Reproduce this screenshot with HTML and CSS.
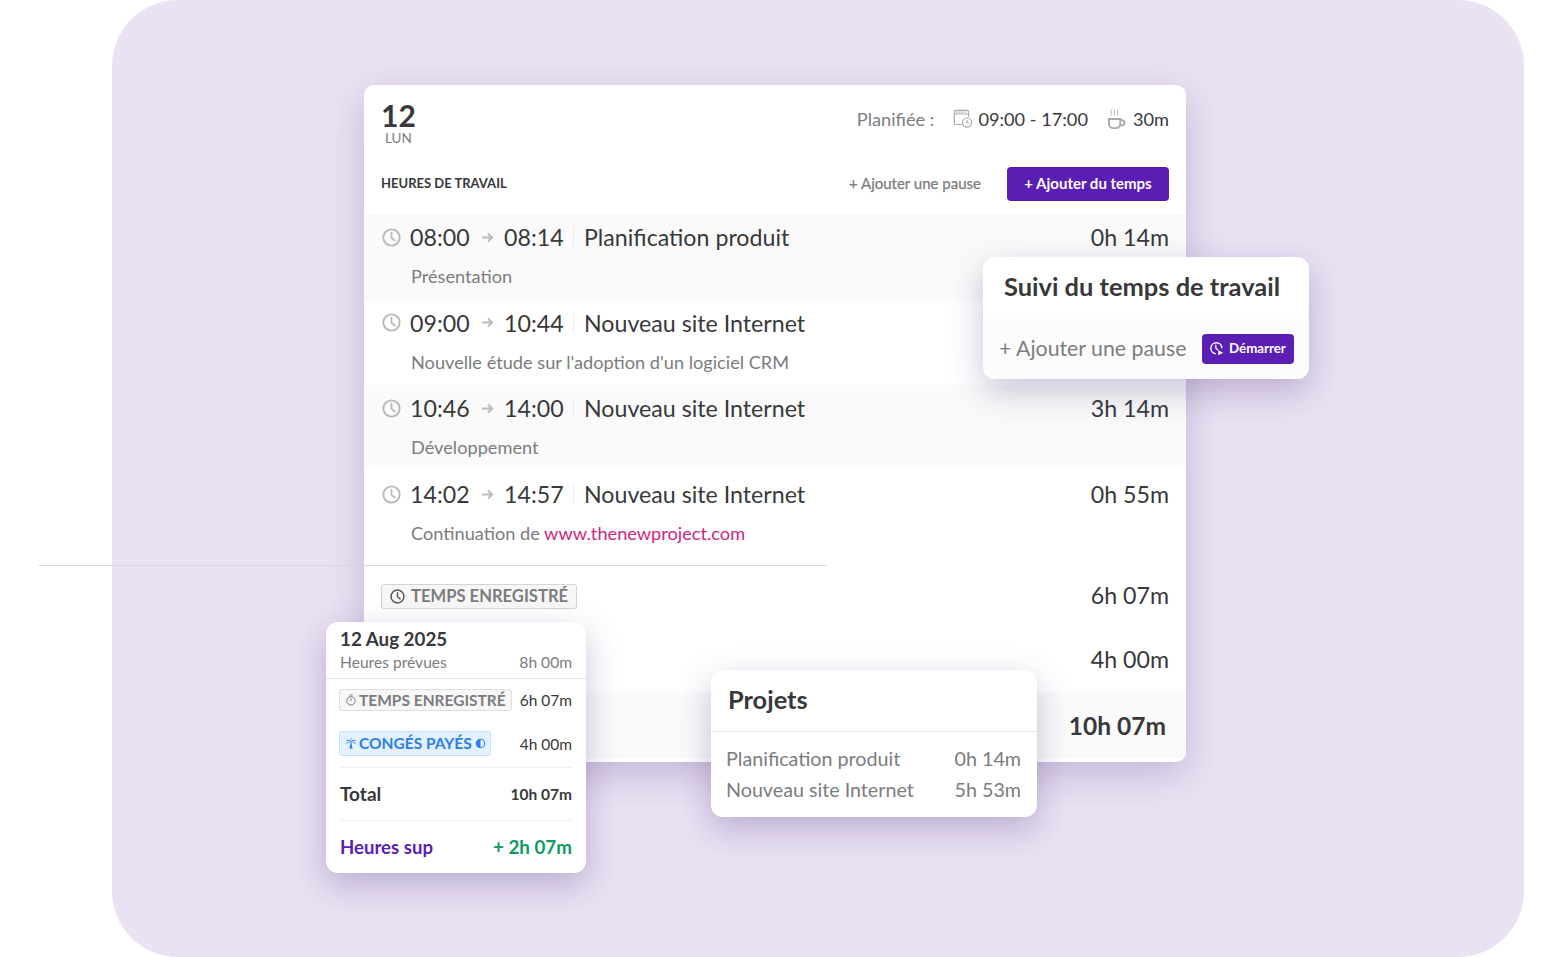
FILE: index.html
```html
<!DOCTYPE html>
<html lang="fr">
<head>
<meta charset="utf-8">
<meta name="viewport" content="width=device-width,initial-scale=1">
<title>Suivi du temps de travail</title>
<link rel="stylesheet" href="styles.css">
</head>
<body>

<svg class="sprites" width="0" height="0" aria-hidden="true">
  <symbol id="i-clock" viewBox="0 0 20 20">
    <circle cx="10" cy="10" r="8.6" fill="none" stroke="currentColor" stroke-width="2"/>
    <path d="M10 5V10.4L13.4 13.2" fill="none" stroke="currentColor" stroke-width="1.9" stroke-linecap="round" stroke-linejoin="round"/>
  </symbol>
  <symbol id="i-arrow" viewBox="0 0 14 12">
    <path d="M1 6H12M7.6 1.6 12 6 7.6 10.4" fill="none" stroke="currentColor" stroke-width="2.2"/>
  </symbol>
  <symbol id="i-sched" viewBox="0 0 20 20">
    <path d="M9 15.5H2.6a1.3 1.3 0 0 1-1.3-1.3V2.6a1.3 1.3 0 0 1 1.3-1.3h11.6a1.3 1.3 0 0 1 1.3 1.3V8" fill="none" stroke="currentColor" stroke-width="1.2"/>
    <path d="M1.5 5H15.3" fill="none" stroke="currentColor" stroke-width="1.2"/>
    <path d="M3.5 3.2H13" fill="none" stroke="currentColor" stroke-width="1.2" stroke-dasharray="1.5 1"/>
    <circle cx="14" cy="13.6" r="4.6" fill="none" stroke="currentColor" stroke-width="1.2"/>
    <path d="M14 11V13.8H16.2" fill="none" stroke="currentColor" stroke-width="1.1"/>
  </symbol>
  <symbol id="i-cup" viewBox="0 0 20 22">
    <path d="M2 11H14V16a4.6 4.6 0 0 1-4.6 4.6H6.6A4.6 4.6 0 0 1 2 16Z" fill="none" stroke="currentColor" stroke-width="1.9"/>
    <path d="M14 12.2h1.6a2.5 2.5 0 0 1 0 5.6H13.6" fill="none" stroke="currentColor" stroke-width="1.9"/>
    <path d="M4.6 1.2c-1 1.4 1 2.2 0 3.6s-.6 2 0 2.6M8 1.2c-1 1.4 1 2.2 0 3.6s-.6 2 0 2.6M11.4 1.2c-1 1.4 1 2.2 0 3.6s-.6 2 0 2.6" fill="none" stroke="currentColor" stroke-width="1"/>
  </symbol>
  <symbol id="i-start" viewBox="0 0 18 18">
    <path d="M7.6 15.2A6.6 6.6 0 1 1 15.4 8" fill="none" stroke="currentColor" stroke-width="1.7" stroke-linecap="round"/>
    <path d="M8.2 5V8.6L10.6 10.6" fill="none" stroke="currentColor" stroke-width="1.5" stroke-linecap="round"/>
    <path d="M11 11 17 14 11 17Z" fill="currentColor"/>
  </symbol>
  <symbol id="i-timer" viewBox="0 0 12 12">
    <circle cx="6" cy="6.8" r="4.2" fill="none" stroke="currentColor" stroke-width="1"/>
    <path d="M4.4 1H7.6M6 4.4V7" fill="none" stroke="currentColor" stroke-width="1"/>
  </symbol>
  <symbol id="i-palm" viewBox="0 0 12 12">
    <path d="M5.6 4.5C5.4 7 5.1 9 4.4 11.6H7.6C6.9 9 6.6 7 6.4 4.5Z" fill="currentColor"/>
    <path d="M6 5C4.8 2.4 2.4 2 .6 3.8 3 3.4 4.4 3.8 6 5ZM6 5C7.2 2.4 9.6 2 11.4 3.8 9 3.4 7.6 3.8 6 5ZM6 4.6C4 4.2 1.6 5 1 7.6 2.6 6 4.2 5.2 6 4.6ZM6 4.6C8 4.2 10.4 5 11 7.6 9.4 6 7.8 5.2 6 4.6ZM6 4.6C5.4 3 5.6 1.6 6 .6 6.4 1.6 6.6 3 6 4.6Z" fill="currentColor"/>
  </symbol>
  <symbol id="i-half" viewBox="0 0 12 12">
    <circle cx="6" cy="6" r="4.6" fill="none" stroke="currentColor" stroke-width="1.2"/>
    <path d="M6 1.4a4.6 4.6 0 0 0 0 9.2Z" fill="currentColor"/>
  </symbol>
</svg>

<div class="page">
  <div class="backdrop">

    <!-- MAIN TIMESHEET CARD -->
    <section class="sheet">
      <header class="sheet-top">
        <div class="day">
          <div class="day-num">12</div>
          <div class="day-name">LUN</div>
        </div>
        <div class="planned">
          <span class="planned-label">Planifiée :</span>
          <svg class="ico-sched"><use href="#i-sched"/></svg>
          <span class="planned-hours">09:00 - 17:00</span>
          <svg class="ico-cup"><use href="#i-cup"/></svg>
          <span>30m</span>
        </div>
      </header>

      <div class="sheet-bar">
        <div class="sheet-title">HEURES DE TRAVAIL</div>
        <div class="add-pause">+ Ajouter une pause</div>
        <button class="btn-add">+ Ajouter du temps</button>
      </div>

      <div class="entry shaded">
        <div class="entry-line">
          <svg class="ico-clock"><use href="#i-clock"/></svg>
          <span class="t">08:00</span>
          <svg class="ico-arrow"><use href="#i-arrow"/></svg>
          <span class="t">08:14</span>
          <span class="sep"></span>
          <span class="entry-name">Planification produit</span>
          <span class="entry-dur">0h 14m</span>
        </div>
        <div class="entry-note">Présentation</div>
      </div>

      <div class="entry">
        <div class="entry-line">
          <svg class="ico-clock"><use href="#i-clock"/></svg>
          <span class="t">09:00</span>
          <svg class="ico-arrow"><use href="#i-arrow"/></svg>
          <span class="t">10:44</span>
          <span class="sep"></span>
          <span class="entry-name">Nouveau site Internet</span>
          <span class="entry-dur">1h 44m</span>
        </div>
        <div class="entry-note">Nouvelle étude sur l'adoption d'un logiciel CRM</div>
      </div>

      <div class="entry shaded short">
        <div class="entry-line">
          <svg class="ico-clock"><use href="#i-clock"/></svg>
          <span class="t">10:46</span>
          <svg class="ico-arrow"><use href="#i-arrow"/></svg>
          <span class="t">14:00</span>
          <span class="sep"></span>
          <span class="entry-name">Nouveau site Internet</span>
          <span class="entry-dur">3h 14m</span>
        </div>
        <div class="entry-note">Développement</div>
      </div>

      <div class="entry tall">
        <div class="entry-line">
          <svg class="ico-clock"><use href="#i-clock"/></svg>
          <span class="t">14:02</span>
          <svg class="ico-arrow"><use href="#i-arrow"/></svg>
          <span class="t">14:57</span>
          <span class="sep"></span>
          <span class="entry-name">Nouveau site Internet</span>
          <span class="entry-dur">0h 55m</span>
        </div>
        <div class="entry-note">Continuation de <a href="#">www.thenewproject.com</a></div>
      </div>

      <div class="sum-row first">
        <span class="tag-big"><svg class="ico-tag"><use href="#i-clock"/></svg>TEMPS ENREGISTRÉ</span>
        <span class="sum-val">6h 07m</span>
      </div>
      <div class="sum-row">
        <span class="sum-val">4h 00m</span>
      </div>
      <div class="sum-row shaded">
        <span class="sum-val strong">10h 07m</span>
      </div>
    </section>

    <!-- FLOATING: TIME TRACKER -->
    <aside class="float tracker">
      <div class="tracker-title">Suivi du temps de travail</div>
      <div class="tracker-foot">
        <span class="tracker-pause">+ Ajouter une pause</span>
        <button class="btn-start"><svg class="ico-start"><use href="#i-start"/></svg>Démarrer</button>
      </div>
    </aside>

    <!-- FLOATING: DAY SUMMARY -->
    <aside class="float daycard">
      <div class="daycard-head">
        <div class="daycard-date">12 Aug 2025</div>
        <div class="line muted"><span>Heures prévues</span><span>8h 00m</span></div>
      </div>
      <div class="line tag-line">
        <span class="tag"><svg class="ico-mini"><use href="#i-timer"/></svg>TEMPS ENREGISTRÉ</span>
        <span>6h 07m</span>
      </div>
      <div class="line tag-line second">
        <span class="tag blue"><svg class="ico-mini"><use href="#i-palm"/></svg>CONGÉS PAYÉS<svg class="ico-half"><use href="#i-half"/></svg></span>
        <span>4h 00m</span>
      </div>
      <div class="line total">
        <span class="total-label">Total</span><span class="total-val">10h 07m</span>
      </div>
      <div class="line extra">
        <span>Heures sup</span><span class="extra-val">+ 2h 07m</span>
      </div>
    </aside>

    <!-- FLOATING: PROJECTS -->
    <aside class="float projects">
      <div class="projects-title">Projets</div>
      <div class="projects-list">
        <div class="line"><span>Planification produit</span><span>0h 14m</span></div>
        <div class="line"><span>Nouveau site Internet</span><span>5h 53m</span></div>
      </div>
    </aside>
  </div>

  <div class="rule"></div>
</div>

</body>
</html>
```

FILE: styles.css
```css
:root{
  --purple:#5a1eb2;
  --ink:#38383b;
  --grey:#7c7c80;
  --shade:#fafafa;
  --line:#e4e4e6;
}
*{box-sizing:border-box;margin:0;padding:0}
body{font-family:Lato,"Open Sans",sans-serif;background:#fff;color:var(--ink)}
.sprites{position:absolute}
svg{display:block;flex:none}

.page{position:relative;width:1550px;height:957px;overflow:hidden}
.backdrop{
  position:relative;width:1412px;height:957px;margin-left:112px;
  padding:85px 0 0 252px;background:#eae1f3;border-radius:66px;
}
.rule{position:absolute;left:39px;top:565px;width:788px;height:1px;background:#d9d5de}

/* ---------- MAIN CARD ---------- */
.sheet{
  width:822px;height:677px;background:#fff;border-radius:10px;overflow:hidden;
  box-shadow:0 12px 36px rgba(70,45,125,.24);
}
.sheet-top{display:flex;justify-content:space-between;height:82px;padding:13px 17px 0}
.day-num{font-size:30px;font-weight:700;line-height:34px}
.day-name{font-size:13.5px;line-height:16px;color:var(--grey);margin:-2px 0 0 4px}
.planned{display:flex;align-items:center;height:42px;font-size:18.2px}
.planned-label{color:var(--grey);margin-right:19px}
.planned-hours{margin:0 19px 0 5px}
.ico-sched{width:20px;height:20px;color:#a9a9ad}
.ico-cup{width:19px;height:22px;color:#a9a9ad;margin-right:7px}

.sheet-bar{display:flex;align-items:center;height:34px;padding:0 17px}
.sheet-title{font-size:13px;font-weight:700;flex:1;padding-bottom:2px}
.add-pause{font-size:15px;color:var(--grey);margin-right:26px;padding-bottom:2px;-webkit-text-stroke:.25px var(--grey)}
.btn-add{
  width:162px;height:34px;padding-bottom:2px;border:0;border-radius:4px;background:var(--purple);
  color:#fff;font:700 15px Lato,sans-serif;
}

.entry{height:85.7px;padding:0 17px 0 18px}
.entry.short{height:82px}
.entry.tall{height:89.4px;padding-top:3.7px}
.sheet-bar + .entry{margin-top:13px}
.shaded{background:var(--shade)}
.entry-line{display:flex;align-items:center;height:46px;font-size:23.2px}
.ico-clock{width:19px;height:19px;color:#b9b9bc;margin-right:9px}
.t{width:60px}
.ico-arrow{width:13px;height:11px;color:#bcbcbf;margin:0 10px 0 11px}
.sep{width:1px;height:20px;background:#ececee;margin:0 10px 0 9px}
.entry-dur{margin-left:auto}
.entry-note{font-size:18.2px;line-height:30px;color:var(--grey);padding:1px 0 0 29px}
.entry-note a{color:#d3247d;text-decoration:none}

.sum-row{display:flex;align-items:center;height:64px;padding:0 17px;font-size:23.2px}
.sum-row.first{margin-top:7.3px}
.sum-row.shaded{height:66px;padding-right:20px}
.sum-val{margin-left:auto;padding-bottom:2px}
.sum-val.strong{font-size:24.5px;font-weight:700;padding-bottom:0}
.tag-big{
  display:flex;align-items:center;gap:6px;height:25px;padding:0 8px;
  background:#f7f7f7;border:1px solid #d4d4d6;border-radius:3px;
  font-size:16.6px;font-weight:700;color:var(--grey);white-space:nowrap;
}
.ico-tag{width:15px;height:15px;color:#555}

/* ---------- FLOATING CARDS ---------- */
.float{position:absolute;background:#fff;border-radius:12px;box-shadow:0 12px 34px rgba(60,35,110,.27)}
.line{display:flex;justify-content:space-between;align-items:center}

.tracker{left:871px;top:257px;width:326px;height:122px;overflow:hidden}
.tracker-title{height:62px;padding:12px 0 0 21px;font-size:25.45px;font-weight:700;line-height:34px}
.tracker-foot{display:flex;align-items:center;justify-content:space-between;height:60px;padding:0 15px 0 16px;background:#fcfcfc}
.tracker-pause{font-size:21.3px;color:var(--grey);padding-bottom:2px}
.btn-start{
  display:flex;align-items:center;gap:5px;height:30px;width:92px;padding:0 0 2px 7px;
  border:0;border-radius:4px;background:var(--purple);color:#fff;font:700 13.3px Lato,sans-serif;
}
.ico-start{width:15px;height:15px}

.daycard{left:214px;top:622px;width:260px;height:251px;padding:0 14px 0 14px}
.daycard-head{height:57px;margin:0 -14px;padding:5px 14px 0;border-bottom:1px solid var(--line)}
.daycard-date{font-size:18.8px;font-weight:700;line-height:24px}
.muted{font-size:15.6px;line-height:22px;color:var(--grey)}
.tag-line{height:42px;font-size:15.5px}
.tag-line.second{height:47px;padding-bottom:1px;border-bottom:1px solid #eeeeef}
.tag{
  display:flex;align-items:center;gap:2px;height:22px;margin-left:-1px;padding:0 5px 1px;
  background:#f7f7f7;border:1px solid #dedee0;border-radius:3px;
  font-size:15.5px;font-weight:700;color:var(--grey);white-space:nowrap;
}
.tag.blue{height:25px;padding-right:4px;background:#e3f0fd;border-color:#c4dffa;color:#2b7fe8}
.ico-mini{width:12px;height:12px}
.ico-half{width:11px;height:11px;margin-left:1px}
.total{height:53px;padding-bottom:1px;border-bottom:1px solid #eeeeef}
.total-label{font-size:19px;font-weight:700}
.total-val{font-size:15.5px;font-weight:700}
.extra{height:51px;font-size:18.6px;font-weight:700;color:var(--purple)}
.extra-val{font-size:18.8px;color:#0f9a62}

.projects{left:599px;top:670px;width:326px;height:147px}
.projects-title{height:62px;padding:12px 0 0 17px;font-size:25.4px;font-weight:700;line-height:34px;border-bottom:1px solid var(--line)}
.projects-list{padding:11px 16px 0 15px;font-size:19.7px;line-height:31px;color:var(--grey)}
```
